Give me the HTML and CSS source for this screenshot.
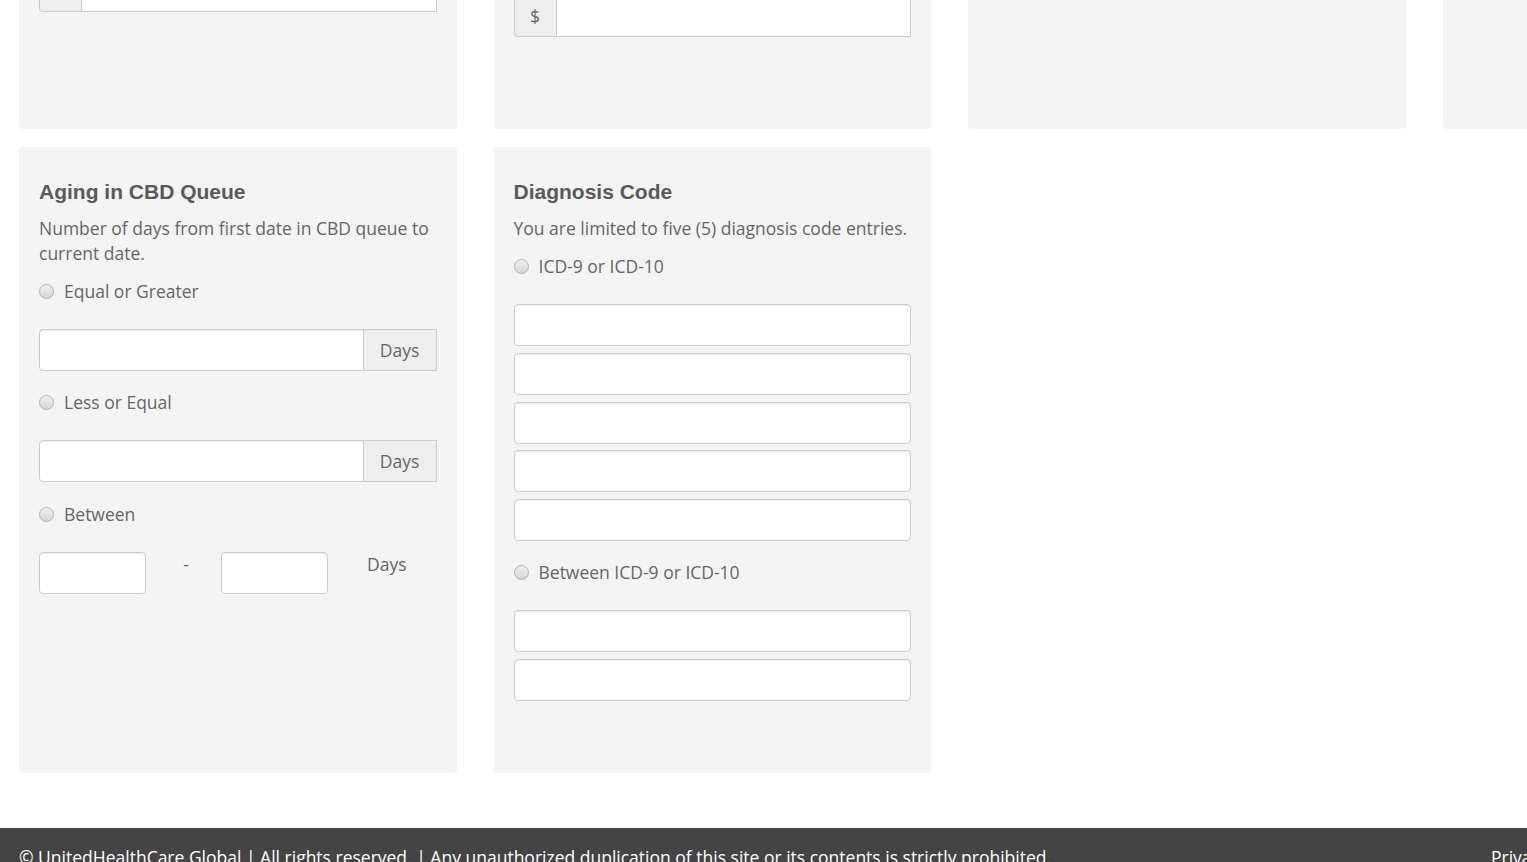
FILE: index.html
```html
<!DOCTYPE html>
<html lang="en">
<head>
<meta charset="utf-8">
<title>Search Criteria</title>
<link rel="stylesheet" href="styles.css">
</head>
<body>
<main class="page">
  <div class="grid">
    <section class="card card-top card-top-a">
      <div class="input-group">
        <span class="addon addon-left"></span>
        <input class="field" type="text">
      </div>
    </section>
    <section class="card card-top card-top-b">
      <div class="input-group">
        <span class="addon addon-left">$</span>
        <input class="field" type="text">
      </div>
    </section>
    <section class="card card-top"></section>
    <section class="card card-top"></section>

    <section class="card">
      <h3 class="card-title">Aging in CBD Queue</h3>
      <p class="card-desc">Number of days from first date in CBD queue to current date.</p>
      <div class="option">
        <label class="radio"><input type="radio" name="aging"><span>Equal or Greater</span></label>
        <div class="input-group">
          <input class="field field-left" type="text">
          <span class="addon addon-right">Days</span>
        </div>
      </div>
      <div class="option">
        <label class="radio"><input type="radio" name="aging"><span>Less or Equal</span></label>
        <div class="input-group">
          <input class="field field-left" type="text">
          <span class="addon addon-right">Days</span>
        </div>
      </div>
      <div class="option option-between">
        <label class="radio"><input type="radio" name="aging"><span>Between</span></label>
        <div class="between">
          <input class="field" type="text">
          <span class="between-sep">-</span>
          <input class="field" type="text">
          <span class="between-unit">Days</span>
        </div>
      </div>
    </section>

    <section class="card card-tall">
      <h3 class="card-title">Diagnosis Code</h3>
      <p class="card-desc">You are limited to five (5) diagnosis code entries.</p>
      <div class="option">
        <label class="radio"><input type="radio" name="diag"><span>ICD-9 or ICD-10</span></label>
        <div class="stack">
          <input class="field" type="text">
          <input class="field" type="text">
          <input class="field" type="text">
          <input class="field" type="text">
          <input class="field" type="text">
        </div>
      </div>
      <div class="option">
        <label class="radio"><input type="radio" name="diag"><span>Between ICD-9 or ICD-10</span></label>
        <div class="stack">
          <input class="field" type="text">
          <input class="field" type="text">
        </div>
      </div>
    </section>
  </div>

  <footer class="footer">
    <span class="footer-left">© UnitedHealthCare Global&nbsp;|&nbsp;All rights reserved.&nbsp;|&nbsp;Any unauthorized duplication of this site or its contents is strictly prohibited.</span>
    <span class="footer-right">Privacy Policy&nbsp;|&nbsp;Terms of Use</span>
  </footer>
</main>
</body>
</html>
```

FILE: styles.css
```css
html, body {
  margin: 0;
  padding: 0;
  background: #fff;
  overflow: hidden;
}

body {
  font-family: "Open Sans", "Noto Sans", sans-serif;
  font-size: 17.5px;
  color: #666;
}

.page {
  width: 1899px;
  margin-top: -160px;
}

.grid {
  display: grid;
  grid-template-columns: repeat(4, 437.5px);
  column-gap: 37px;
  row-gap: 19px;
  padding: 0 19px;
  align-items: stretch;
}

.card {
  background: #f4f4f4;
  border-radius: 3px;
  box-shadow: 0 1px 1px rgba(0, 0, 0, 0.04);
  padding: 20px 20px 71px;
  box-sizing: border-box;
}

.card-top {
  min-height: 288px;
  display: flex;
  flex-direction: column;
  justify-content: flex-end;
}

.card-top-a {
  padding-bottom: 116px;
}

.card-top-b {
  padding-bottom: 91px;
}

.card-title {
  margin: 13px 0 0;
  font-family: "Liberation Sans", Arial, sans-serif;
  font-weight: bold;
  font-size: 21px;
  line-height: 23px;
  color: #5a5a5a;
}

.card-desc {
  margin: 12.5px 0 13px;
  line-height: 25px;
}

.option + .option {
  margin-top: 18.5px;
}

.option-between {
  margin-top: 19.5px !important;
}

.radio {
  display: flex;
  align-items: center;
  line-height: 25px;
  margin-bottom: 25.5px;
}

.radio input {
  appearance: none;
  -webkit-appearance: none;
  width: 15px;
  height: 15px;
  margin: 0 10px 0 0;
  border: 1px solid #b0b0b0;
  border-radius: 50%;
  background: linear-gradient(180deg, #f0f0f0 0%, #d6d6d6 100%);
  box-sizing: border-box;
  flex: none;
}

.field {
  display: block;
  height: 42px;
  box-sizing: border-box;
  border: 1px solid #ccc;
  border-radius: 4px;
  background: #fff;
  box-shadow: inset 0 1px 1px rgba(0, 0, 0, 0.075);
  padding: 6px 12px;
  font: inherit;
  margin: 0;
  width: 100%;
}

.input-group {
  display: flex;
  height: 42px;
}

.input-group .field {
  flex: 1;
  min-width: 0;
}

.addon {
  display: flex;
  align-items: center;
  justify-content: center;
  box-sizing: border-box;
  background: #eee;
  border: 1px solid #ccc;
  color: #666;
  flex: none;
}

.addon-left {
  width: 42px;
  border-right: 0;
  border-radius: 4px 0 0 4px;
}

.addon-left + .field {
  border-radius: 0;
}

.field-left {
  border-radius: 4px 0 0 4px;
}

.addon-right {
  width: 73px;
  border-left: 0;
}

.between {
  display: grid;
  grid-template-columns: 107px 75px 107px auto;
  align-items: start;
  line-height: 25px;
}

.between-sep {
  text-align: center;
  padding-left: 5px;
}

.between-unit {
  padding-left: 39px;
}

.stack {
  display: flex;
  flex-direction: column;
  gap: 6.75px;
}

.footer {
  display: flex;
  margin-top: 56px;
  background: #444;
  color: #fff;
  height: 60px;
  padding: 17px 0 0 19px;
  box-sizing: border-box;
  line-height: 25px;
  white-space: nowrap;
}

.footer-left {
  flex: 0 0 1472px;
}
```
